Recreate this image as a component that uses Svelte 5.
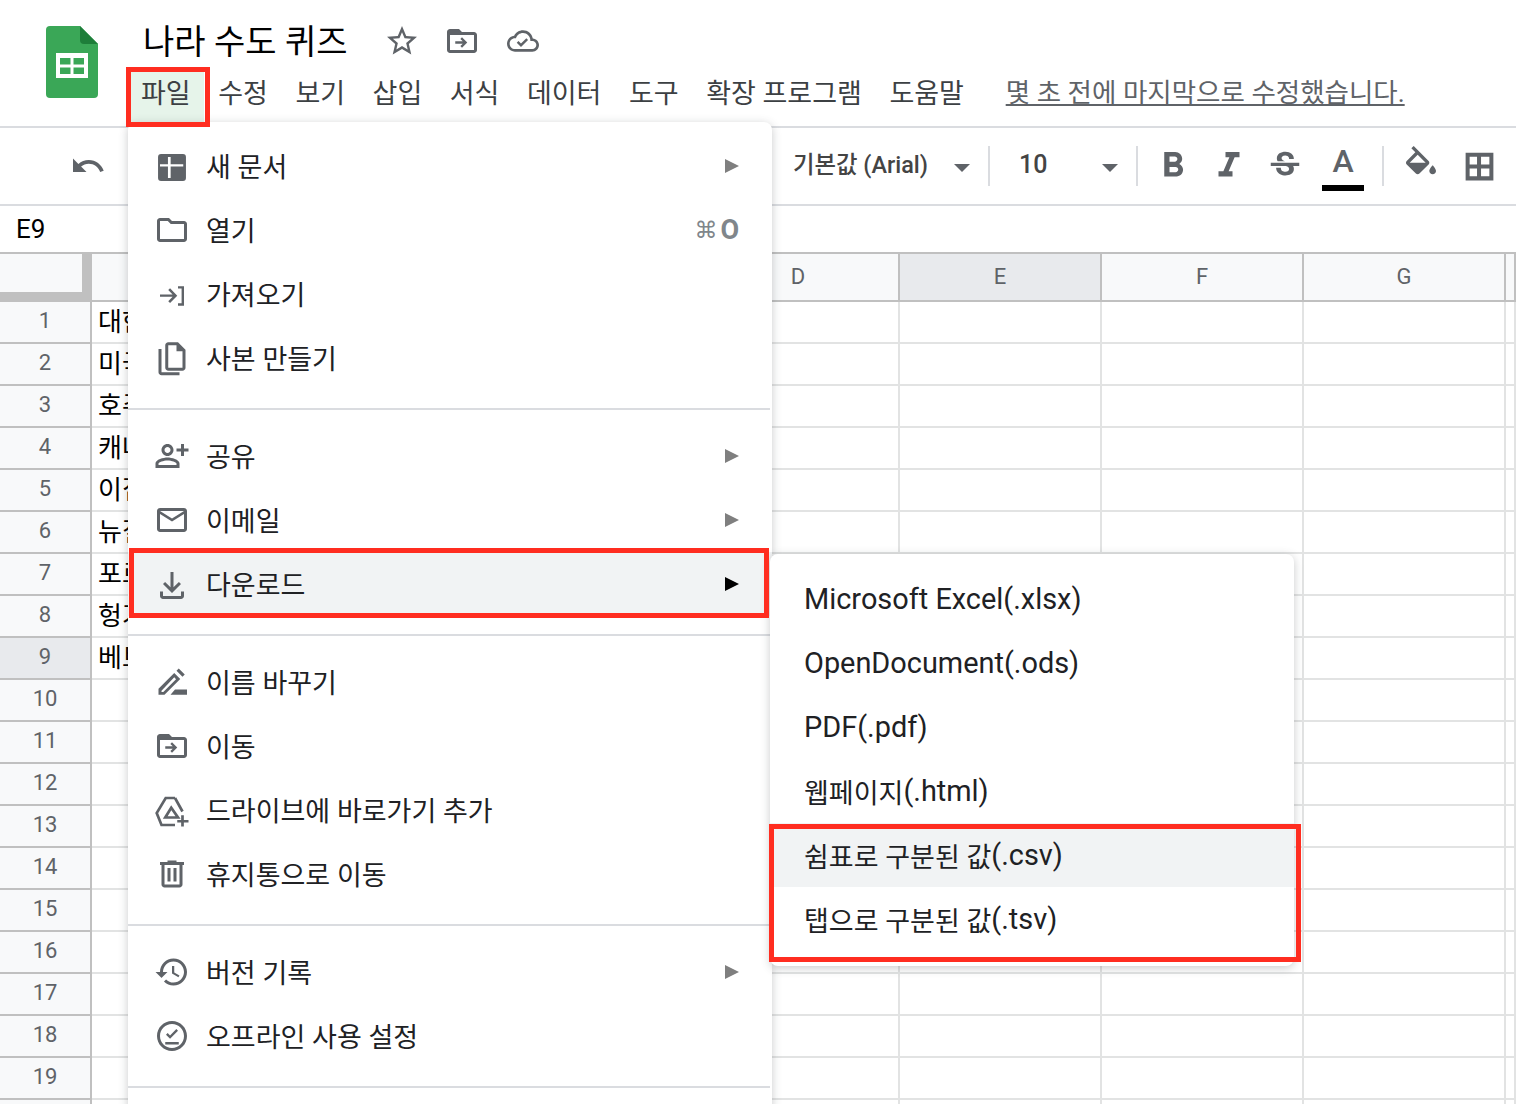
<script>
	const tabs = ['파일', '수정', '보기', '삽입', '서식', '데이터', '도구', '확장 프로그램', '도움말'];
	const columns = ['', '', '', 'D', 'E', 'F', 'G', ''];
	const countries = ['대한민국', '미국', '호주', '캐나다', '이집트', '뉴질랜드', '포르투갈', '헝가리', '베트남'];
	const rows = Array.from({ length: 20 }, (_, i) => i + 1);

	const icons = {
		newdoc: { d: 'M4.700 4h14.600a2 2 0 0 1 2 2v14a2 2 0 0 1-2 2H4.700a2 2 0 0 1-2-2V6a2 2 0 0 1 2-2zM4 10.800h5.300V6h1.800v4.800h8.400v1.600h-8.400V20H9.300v-7.600H4z' },
		folder: { d: 'M10 4H4c-1.100 0-2 .9-2 2v12c0 1.100.9 2 2 2h16c1.100 0 2-.9 2-2V8c0-1.100-.9-2-2-2h-8l-2-2zM20 18H4V6h5.170l2 2H20v10z' },
		import: { d: 'M4 12.300h8.400l-2.900-2.900 1.200-1.200 4.800 4.900-4.800 4.900-1.200-1.200 2.900-2.900H4zM16 6.800h4v13h-4v-1.600h2.400V8.400H16z' },
		copy: { d: 'M9.500 1.500H16l5 5v12c0 1.100-.9 2-2 2H9.500c-1.100 0-2-.9-2-2v-15c0-1.100.9-2 2-2zm0 2v15H19V7.500h-4v-4zM3 6h2v15.500h12v2H5c-1.100 0-2-.9-2-2z' },
		share: { d: 'M9 6c1.100 0 2 .9 2 2s-.9 2-2 2-2-.9-2-2 .9-2 2-2m0 9c2.700 0 5.800 1.290 6 2v1H3v-.99c.2-.72 3.300-2.010 6-2.010m0-11C6.790 4 5 5.790 5 8s1.790 4 4 4 4-1.790 4-4-1.790-4-4-4zm0 9c-2.670 0-8 1.340-8 4v3h16v-3c0-2.660-5.330-4-8-4zM20 7V4h-2v3h-3v2h3v3h2V9h3V7z' },
		mail: { d: 'M20 4H4c-1.100 0-2 .9-2 2v12c0 1.100.9 2 2 2h16c1.100 0 2-.9 2-2V6c0-1.100-.9-2-2-2zm0 14H4V8l8 5 8-5v10zm-8-7L4 6h16l-8 5z' },
		download: { d: 'M11 4h2v10.200l3.600-3.600 1.400 1.400-6 6-6-6 1.400-1.400 3.600 3.600zM4 17h2v3h12v-3h2v3c0 1.100-.9 2-2 2H6c-1.100 0-2-.9-2-2z' },
		rename: { d: 'M3 20.500v-4L13.500 6l4 4L7 20.500zm2-1.900h1.200l8.500-8.500-1.200-1.200L5 17.900zM15 4.500 16.500 3l4 4L19 8.500zM14 17h8v3.500H11z' },
		move: { d: 'M20 6h-8l-2-2H4c-1.100 0-2 .9-2 2v12c0 1.100.9 2 2 2h16c1.100 0 2-.9 2-2V8c0-1.100-.9-2-2-2zm0 12H4V8h16v10zM12 9.500l-1.100 1.100 1.600 1.600H7.500v1.600h5l-1.600 1.600 1.100 1.100 3.500-3.500z' },
		drive: { s: 'M14 4H7.800L1.800 14 5 22h9M14 4l5 9M11.500 10.500 7.500 17h8.500zM19 15.500V23M15.500 19.500H23' },
		trash: { d: 'M15 4V3H9v1H4v2h1v13c0 1.100.9 2 2 2h10c1.100 0 2-.9 2-2V6h1V4h-5zm2 15H7V6h10v13zM9 8h2v9H9zm4 0h2v9h-2z' },
		history: { d: 'M13 3c-4.970 0-9 4.030-9 9H1l3.890 3.890.07.14L9 12H6c0-3.870 3.130-7 7-7s7 3.130 7 7-3.130 7-7 7c-1.930 0-3.680-.79-4.940-2.060l-1.420 1.420C8.270 19.990 10.510 21 13 21c4.970 0 9-4.030 9-9s-4.030-9-9-9zm-1 5v5l4.280 2.540.72-1.210-3.500-2.080V8H12z' },
		offline: { d: 'M12 2C6.480 2 2 6.480 2 12s4.480 10 10 10 10-4.480 10-10S17.520 2 12 2zm0 18c-4.410 0-8-3.590-8-8s3.590-8 8-8 8 3.590 8 8-3.590 8-8 8zM7.500 16h9v1.600h-9zM10.700 13.800 8 11.100 9.100 10l1.600 1.600 4.200-4.200 1.100 1.100z' },
		undo: { d: 'M12.500 8c-2.650 0-5.050.99-6.900 2.600L2 7v9h9l-3.620-3.620c1.390-1.160 3.160-1.880 5.120-1.880 3.540 0 6.550 2.310 7.600 5.500l2.370-.78C21.080 11.030 17.150 8 12.500 8z' },
		star: { d: 'M22 9.240l-7.190-.62L12 2 9.190 8.630 2 9.240l5.460 4.730L5.820 21 12 17.270 18.180 21l-1.630-7.030L22 9.240zM12 15.400l-3.760 2.270 1-4.280-3.320-2.880 4.380-.38L12 6.100l1.710 4.040 4.380.38-3.320 2.880 1 4.280L12 15.400z' },
		cloud: { d: 'M19.350 10.040C18.670 6.590 15.640 4 12 4 9.110 4 6.600 5.640 5.350 8.040 2.340 8.360 0 10.910 0 14c0 3.310 2.690 6 6 6h13c2.760 0 5-2.240 5-5 0-2.640-2.050-4.780-4.650-4.960zM19 18H6c-2.210 0-4-1.790-4-4s1.790-4 4-4h.71C7.370 7.690 9.480 6 12 6c3.040 0 5.500 2.460 5.500 5.500v.5H19c1.660 0 3 1.340 3 3s-1.340 3-3 3zM10.500 16.500 7.300 13.300l1.300-1.300 1.900 1.900 4-4 1.300 1.300z' },
		bold: { d: 'M15.600 10.790c.97-.67 1.650-1.770 1.650-2.790 0-2.260-1.750-4-4-4H7v14h7.040c2.090 0 3.710-1.700 3.710-3.790 0-1.520-.86-2.820-2.150-3.420zM10 6.500h3c.83 0 1.500.67 1.500 1.500s-.67 1.500-1.500 1.500h-3v-3zm3.500 9H10v-3h3.500c.83 0 1.500.67 1.500 1.500s-.67 1.500-1.500 1.500z' },
		italic: { d: 'M10 4v3h2.210l-3.420 8H6v3h8v-3h-2.210l3.420-8H18V4z' },
		strike: { d: 'M6.850 7.080C6.850 4.370 9.450 3 12.240 3c1.640 0 3 .49 3.900 1.280.77.65 1.460 1.730 1.460 3.240h-3.010c0-.31-.05-.59-.15-.85-.29-.86-1.200-1.280-2.250-1.280-1.860 0-2.340 1.020-2.340 1.700 0 .48.25.88.74 1.210.38.25.77.48 1.410.7H7.390c-.21-.34-.54-.89-.54-1.920zM21 12v-2H3v2h9.620c1.150.45 1.960.75 1.960 1.970 0 1-.81 1.670-2.280 1.670-1.540 0-2.930-.54-2.930-2.510H6.400c0 .55.08 1.130.24 1.580.81 2.290 3.290 3.300 5.670 3.300 2.270 0 5.300-.89 5.300-4.050 0-.3-.01-1.160-.48-1.940H21V12z' },
		fill: { d: 'M16.560 8.940 7.620 0 6.210 1.410l2.380 2.380-5.150 5.150c-.59.59-.59 1.540 0 2.120l5.500 5.500c.29.29.68.44 1.060.44s.77-.15 1.060-.44l5.500-5.500c.59-.58.59-1.530 0-2.120zM5.210 10 10 5.210 14.790 10H5.210zM19 11.500s-2 2.170-2 3.500c0 1.100.9 2 2 2s2-.9 2-2c0-1.330-2-3.500-2-3.500z' },
		borders: { d: 'M3 3v18h18V3H3zm7.400 15.400H5.600v-5.100h4.800zm0-7.700H5.600V5.600h4.800zm8 7.700h-5.400v-5.100h5.400zm0-7.700h-5.400V5.600h5.400z' }
	};

	const fileMenu = [
		[
			{ icon: 'newdoc', label: '새 문서', arrow: true },
			{ icon: 'folder', label: '열기', hint: true },
			{ icon: 'import', label: '가져오기' },
			{ icon: 'copy', label: '사본 만들기' }
		],
		[
			{ icon: 'share', label: '공유', arrow: true },
			{ icon: 'mail', label: '이메일', arrow: true },
			{ icon: 'download', label: '다운로드', arrow: true, active: true }
		],
		[
			{ icon: 'rename', label: '이름 바꾸기' },
			{ icon: 'move', label: '이동' },
			{ icon: 'drive', label: '드라이브에 바로가기 추가' },
			{ icon: 'trash', label: '휴지통으로 이동' }
		],
		[
			{ icon: 'history', label: '버전 기록', arrow: true },
			{ icon: 'offline', label: '오프라인 사용 설정' }
		]
	];

	const formats = [
		{ ko: '', en: 'Microsoft Excel(.xlsx)' },
		{ ko: '', en: 'OpenDocument(.ods)' },
		{ ko: '', en: 'PDF(.pdf)' },
		{ ko: '웹페이지', en: '(.html)' },
		{ ko: '쉼표로 구분된 값', en: '(.csv)', active: true },
		{ ko: '탭으로 구분된 값', en: '(.tsv)' }
	];
</script>

{#snippet icon(name)}
	<svg class="icon" viewBox="0 0 24 24" aria-hidden="true">
		{#if icons[name].s}
			<path d={icons[name].s} fill="none" stroke="currentColor" stroke-width="1.8" />
		{:else}
			<path d={icons[name].d} fill="currentColor" fill-rule="evenodd" />
		{/if}
	</svg>
{/snippet}

<div class="page">
	<header class="header">
		<svg class="logo" viewBox="0 0 52 72" aria-hidden="true">
			<path d="M4 0h30l18 18v50a4 4 0 0 1-4 4H4a4 4 0 0 1-4-4V4a4 4 0 0 1 4-4z" fill="#3aa757" />
			<path d="M34 0l18 18H38a4 4 0 0 1-4-4z" fill="#1e7e3a" />
			<path d="M10 27h32v25H10zm4 5v6.500h10.500V32zm13.500 0v6.500H38V32zM14 41.500V48h10.500v-6.500zm13.500 0V48H38v-6.500z" fill="#fff" fill-rule="evenodd" />
		</svg>
		<div class="head-main">
			<div class="title-row">
				<span class="title">나라 수도 퀴즈</span>
				<span class="title-icons">
					{@render icon('star')}
					{@render icon('move')}
					<span class="cloud">{@render icon('cloud')}</span>
				</span>
			</div>
			<nav class="tabs">
				{#each tabs as tab, i}
					<span class="tab" class:open={i === 0}>{tab}</span>
				{/each}
				<span class="saved">몇 초 전에 마지막으로 수정했습니다.</span>
			</nav>
		</div>
	</header>

	<div class="toolbar">
		<span class="undo">{@render icon('undo')}</span>
		<span class="font">기본값 (Arial)</span>
		<span class="caret"></span>
		<span class="sep"></span>
		<span class="size">10</span>
		<span class="caret"></span>
		<span class="sep"></span>
		<span class="tool t-bold">{@render icon('bold')}</span>
		<span class="tool t-italic">{@render icon('italic')}</span>
		<span class="tool t-strike">{@render icon('strike')}</span>
		<span class="text-color">A</span>
		<span class="sep"></span>
		<span class="tool t-fill">{@render icon('fill')}</span>
		<span class="tool t-borders">{@render icon('borders')}</span>
	</div>

	<div class="formula"><span>E9</span></div>

	<div class="grid">
		<div class="corner"></div>
		{#each columns as col}
			<div class="col-head" class:picked={col === 'E'}>{col}</div>
		{/each}
		{#each rows as row}
			<div class="row-head" class:picked={row === 9}>{row < 20 ? row : ''}</div>
			{#each columns as col, c}
				<div class="cell">{c === 0 ? (countries[row - 1] ?? '') : ''}</div>
			{/each}
		{/each}
	</div>

	<div class="menu">
		{#each fileMenu as group, g}
			{#if g > 0}<div class="divider"></div>{/if}
			{#each group as item}
				<div class="item" class:active={item.active}>
					{@render icon(item.icon)}
					<span class="label">{item.label}</span>
					{#if item.hint}<span class="hint"><span class="cmd">⌘</span>O</span>{/if}
					{#if item.arrow}<span class="arrow"></span>{/if}
				</div>
			{/each}
		{/each}
		<div class="divider"></div>
	</div>

	<div class="submenu">
		{#each formats as item}
			<div class="sub-item" class:active={item.active}>
				{#if item.ko}<span class="ko">{item.ko}</span>{/if}<span>{item.en}</span>
			</div>
		{/each}
	</div>

	<div class="callout call-file"></div>
	<div class="callout call-download"></div>
	<div class="callout call-formats"></div>
</div>

<style>
	:global(body) {
		margin: 0;
	}

	.page {
		position: relative;
		width: 1516px;
		height: 1104px;
		overflow: hidden;
		background: #fff;
		color: #202124;
		font-family: Roboto, 'Noto Sans CJK KR', sans-serif;
		font-size: 27px;
	}

	.header {
		display: flex;
		box-sizing: border-box;
		height: 128px;
		padding: 26px 0 0 46px;
		border-bottom: 2px solid #dadce0;
	}

	.logo {
		flex: none;
		width: 52px;
		height: 72px;
	}

	.head-main {
		margin-left: 28px;
		flex: 1;
	}

	.title-row {
		display: flex;
		align-items: center;
		height: 30px;
		padding-left: 17px;
	}

	.title {
		position: relative;
		top: 1px;
		font-size: 34px;
		color: #000;
		line-height: 30px;
	}

	.title-icons {
		display: flex;
		align-items: center;
		margin-left: 36px;
		gap: 24px;
		color: #5f6368;
	}

	.cloud {
		display: flex;
		margin-left: 3px;
	}

	.cloud .icon {
		width: 32px;
		height: 32px;
	}

	.tabs {
		display: flex;
		height: 52px;
		margin-top: 16px;
		white-space: nowrap;
		color: #3c4043;
	}

	.tab {
		display: flex;
		align-items: center;
		box-sizing: border-box;
		height: 52px;
		padding: 0 13.750px 14px;
	}

	.tab.open {
		background: #e6f4ea;
		padding-left: 15px;
	}

	.saved {
		display: flex;
		align-items: center;
		box-sizing: border-box;
		height: 52px;
		padding-bottom: 16px;
		margin-left: 28px;
		color: #5f6368;
		font-size: 26.500px;
		text-decoration: underline;
	}

	.icon {
		flex: none;
		width: 36px;
		height: 36px;
	}

	.toolbar {
		display: flex;
		align-items: center;
		box-sizing: border-box;
		height: 78px;
		padding-left: 70px;
		border-bottom: 2px solid #dadce0;
		color: #5f6368;
	}

	.undo {
		display: flex;
		color: #5f6368;
	}

	.font {
		width: 161px;
		margin-left: 687px;
		padding-bottom: 7px;
		font-size: 23.400px;
		font-weight: 500;
		color: #444;
		white-space: nowrap;
	}

	.size {
		width: 83px;
		margin-left: 29px;
		padding-bottom: 3px;
		font-size: 25px;
		font-weight: 500;
		color: #444;
	}

	.caret {
		flex: none;
		width: 0;
		height: 0;
		margin-top: 4px;
		border-left: 8px solid transparent;
		border-right: 8px solid transparent;
		border-top: 8px solid #5f6368;
	}

	.sep {
		flex: none;
		width: 2px;
		height: 40px;
		margin-left: 18px;
		background: #dadce0;
	}

	.tool {
		display: flex;
	}

	.t-bold {
		margin-left: 14px;
	}

	.t-bold .icon,
	.t-italic .icon {
		width: 42px;
		height: 42px;
	}

	.t-italic {
		margin-left: 14px;
	}

	.t-strike {
		margin-left: 16px;
	}

	.t-strike .icon {
		width: 38px;
		height: 38px;
	}

	.t-fill {
		margin-left: 17px;
	}

	.t-fill .icon {
		width: 40px;
		height: 40px;
	}

	.t-borders {
		margin-left: 20px;
	}

	.t-borders .icon {
		width: 37px;
		height: 37px;
	}

	.text-color {
		box-sizing: border-box;
		width: 42px;
		height: 48px;
		margin-top: 2px;
		margin-left: 18px;
		border-bottom: 6px solid #000;
		text-align: center;
		font-size: 32px;
		font-weight: 500;
		line-height: 36px;
		color: #5f6368;
	}

	.formula {
		display: flex;
		align-items: center;
		box-sizing: border-box;
		height: 46px;
		padding-left: 16px;
		font-size: 26px;
		color: #000;
	}

	.grid {
		display: grid;
		grid-template-columns: 92px repeat(7, 202px) 10px;
		grid-template-rows: 50px;
		grid-auto-rows: 42px;
	}

	.corner,
	.col-head,
	.row-head,
	.cell {
		box-sizing: border-box;
		border-right: 2px solid #e2e3e3;
		border-bottom: 2px solid #e2e3e3;
	}

	.corner {
		border-top: 2px solid #c0c0c0;
		border-right: 10px solid #c0c0c0;
		border-bottom: 10px solid #c0c0c0;
		background: #f8f9fa;
	}

	.col-head {
		display: flex;
		align-items: center;
		justify-content: center;
		padding-bottom: 2px;
		border-top: 2px solid #c0c0c0;
		border-right-color: #c0c0c0;
		border-bottom-color: #c0c0c0;
		background: #f8f9fa;
		font-size: 22px;
		color: #5f6368;
	}

	.row-head {
		display: flex;
		align-items: center;
		justify-content: center;
		padding-bottom: 4px;
		border-right-color: #c0c0c0;
		border-bottom-color: #c0c0c0;
		background: #f8f9fa;
		font-size: 22px;
		color: #5f6368;
	}

	.picked {
		background: #e8eaed;
	}

	.cell {
		padding-left: 6px;
		font-size: 26px;
		line-height: 40px;
		color: #000;
		white-space: nowrap;
		overflow: hidden;
	}

	.menu {
		position: absolute;
		z-index: 2;
		left: 128px;
		top: 122px;
		box-sizing: border-box;
		width: 644px;
		height: 1100px;
		padding-top: 12px;
		background: #fff;
		border-radius: 8px;
		box-shadow: 0 2px 10px rgba(60, 64, 67, 0.28);
		white-space: nowrap;
	}

	.item {
		display: flex;
		align-items: center;
		height: 64px;
		padding: 0 33px 0 26px;
		color: #3c4043;
	}

	.item .icon {
		margin-right: 16px;
		color: #5f6368;
	}

	.item.active {
		background: #f1f3f4;
	}

	.label {
		flex: 1;
		padding-bottom: 2px;
		color: #202124;
	}

	.hint {
		display: flex;
		align-items: center;
		color: #80868b;
		font-size: 27px;
		font-weight: 700;
		line-height: 1;
	}

	.cmd {
		margin-right: 3px;
		font-family: 'DejaVu Sans', sans-serif;
		font-size: 23px;
		font-weight: 400;
	}

	.arrow {
		width: 0;
		height: 0;
		border-left: 14px solid #7f7f7f;
		border-top: 7px solid transparent;
		border-bottom: 7px solid transparent;
	}

	.item.active .arrow {
		border-left-color: #000;
	}

	.divider {
		height: 2px;
		margin: 18px 2px 14px 0;
		background: #dadce0;
	}

	.submenu {
		position: absolute;
		z-index: 3;
		left: 770px;
		top: 554px;
		box-sizing: border-box;
		width: 524px;
		height: 412px;
		padding-top: 13px;
		background: #fff;
		border-radius: 8px;
		box-shadow: 0 2px 10px rgba(60, 64, 67, 0.28);
	}

	.sub-item {
		display: flex;
		align-items: center;
		height: 64px;
		padding-left: 34px;
		color: #202124;
		white-space: nowrap;
		font-size: 28.900px;
	}

	.ko {
		font-size: 27px;
		white-space: pre;
	}

	.sub-item.active {
		background: #f1f3f4;
	}

	.callout {
		position: absolute;
		z-index: 4;
		box-sizing: border-box;
		border: 5px solid #ff2d20;
	}

	.call-file {
		left: 126px;
		top: 67px;
		width: 84px;
		height: 60px;
	}

	.call-download {
		left: 129px;
		top: 548px;
		width: 640px;
		height: 70px;
	}

	.call-formats {
		left: 769px;
		top: 824px;
		width: 532px;
		height: 138px;
	}
</style>
